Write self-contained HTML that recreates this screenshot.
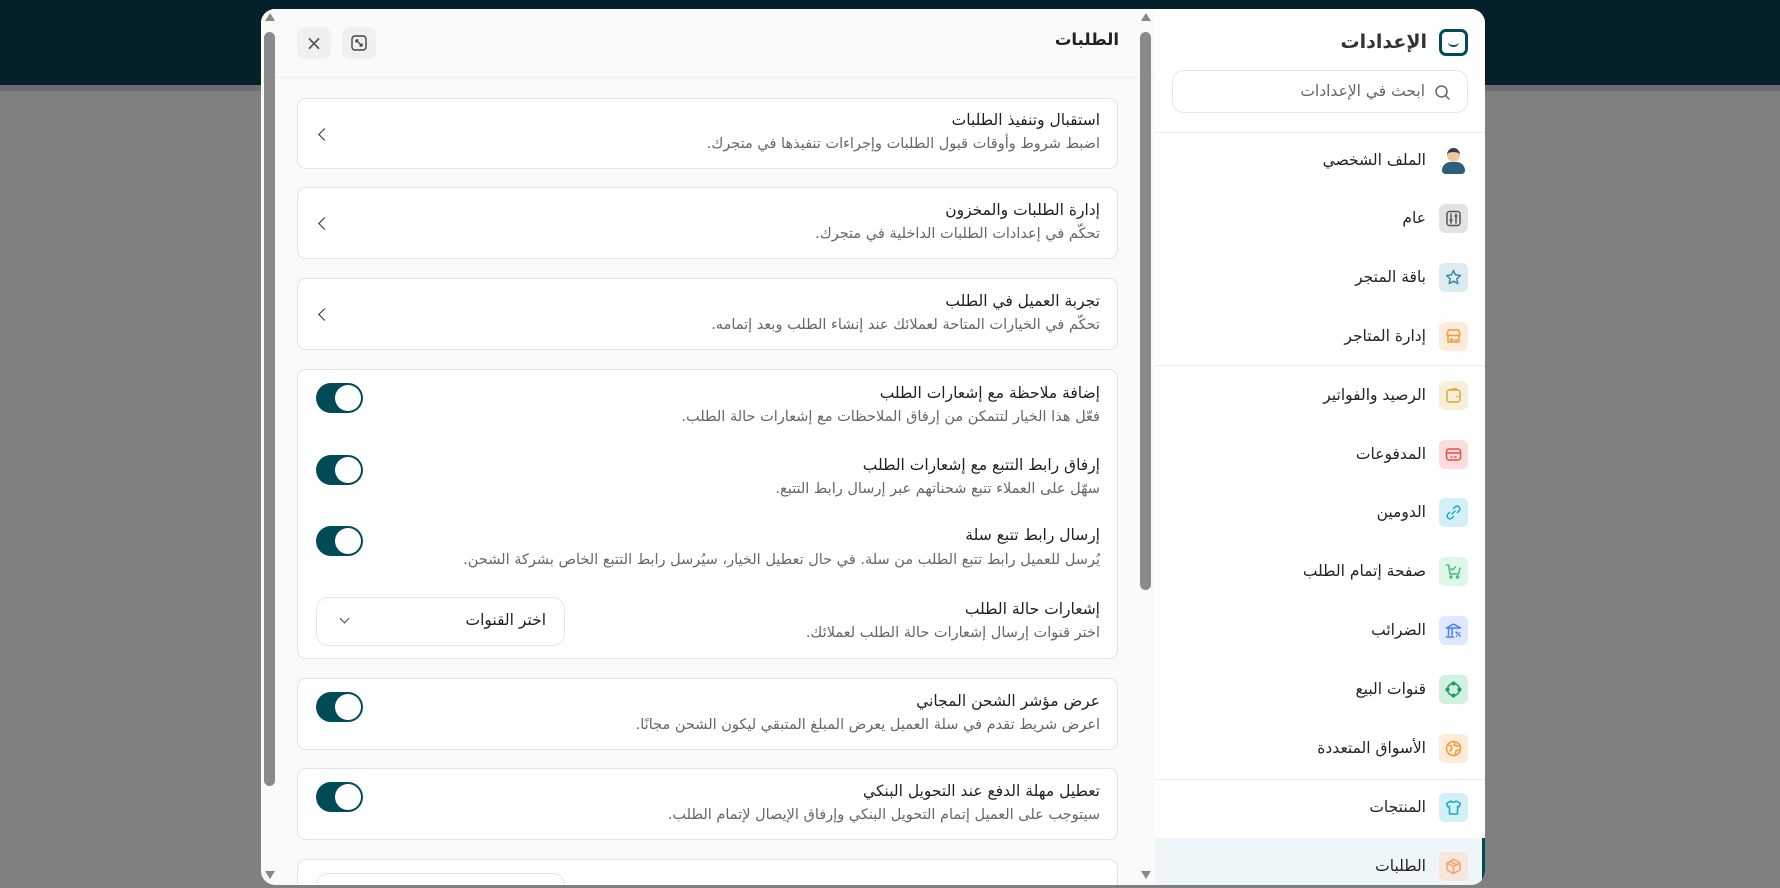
<!DOCTYPE html>
<html dir="ltr"><head><meta charset="utf-8"><style>
*{box-sizing:border-box;margin:0;padding:0}
body{width:1780px;height:888px;overflow:hidden;background:#808080;font-family:"DejaVu Sans","Liberation Sans",sans-serif;position:relative;color:#222}
.top{position:absolute;left:0;top:0;width:1780px;height:85px;background:#06202a}
.abs{position:absolute}
.modal{position:absolute;left:261px;top:9px;width:1224px;height:876px;background:#fafafa;border-radius:14px;overflow:hidden}
.side{position:absolute;left:894px;top:0;width:330px;height:876px;background:#fff}
.hdr{position:absolute;left:0;top:0;width:894px;height:68px;background:#fafafa}
.card{position:absolute;left:36px;width:821px;background:#fff;border:1px solid #e3e3e3;border-radius:9px}
.t{position:absolute;right:17px;font-size:15.5px;color:#1f1f1f;direction:rtl;white-space:nowrap}
.d{position:absolute;right:17px;font-size:14.5px;color:#666;direction:rtl;white-space:nowrap}
.chev{position:absolute;left:22px;width:9px;height:9px;border-left:1.6px solid #333;border-bottom:1.6px solid #333;transform:rotate(45deg)}
.tg{position:absolute;left:18px;width:47px;height:30px;border-radius:15px;background:#004b57}
.tg:after{content:"";position:absolute;right:2px;top:2px;width:26px;height:26px;border-radius:50%;background:#fff}
.it{position:absolute;right:17px;width:310px;height:40px;direction:rtl}
.ib{position:absolute;right:0;top:5px;width:29px;height:29px;border-radius:6px}
.ib svg{position:absolute;left:6px;top:6px;width:17px;height:17px;fill:none;stroke-width:1.5;stroke-linecap:round;stroke-linejoin:round}
.il{position:absolute;right:42px;top:10px;font-size:15.5px;color:#222;white-space:nowrap}
.sb{position:absolute;background:#8a8a8a;border-radius:6px}
</style></head><body>
<div class="top"></div>
<div class="abs" style="left:0;top:85px;width:1780px;height:6px;background:#6a6e70"></div>
<div class="modal">
 <div class="hdr">
  <div class="abs" style="left:36px;top:18px;width:34px;height:32px;background:#f0f0f0;border-radius:8px;font-size:20px;color:#555;text-align:center;line-height:32px">×</div>
  <div class="abs" style="left:81px;top:18px;width:34px;height:32px;background:#f0f0f0;border-radius:8px"><svg class="abs" style="left:9px;top:8px" width="16" height="16" viewBox="0 0 16 16" fill="none" stroke="#444" stroke-width="1.4"><rect x="1" y="1" width="14" height="14" rx="3"/><path d="M5 5l6 6M5 5v2.5M5 5h2.5M11 11v-2.5M11 11h-2.5"/></svg></div>
  <div class="abs" style="right:36px;top:21px;font-size:16.5px;font-weight:bold;color:#222;direction:rtl">الطلبات</div>
 </div>
 <div class="abs" style="left:0;top:68px;width:894px;height:1px;background:#f0f0f0"></div>
 <div class="sb" style="left:3px;top:23px;width:11px;height:754px"></div>
 <div class="sb" style="left:879px;top:23px;width:11px;height:558px"></div>
 <div class="abs" style="left:4px;top:4px;width:0;height:0;border-left:5px solid transparent;border-right:5px solid transparent;border-bottom:8px solid #888"></div>
 <div class="abs" style="left:880px;top:4px;width:0;height:0;border-left:5px solid transparent;border-right:5px solid transparent;border-bottom:8px solid #888"></div>
 <div class="abs" style="left:4px;top:862px;width:0;height:0;border-left:5px solid transparent;border-right:5px solid transparent;border-top:8px solid #888"></div>
 <div class="abs" style="left:880px;top:862px;width:0;height:0;border-left:5px solid transparent;border-right:5px solid transparent;border-top:8px solid #888"></div>

 <div class="card" style="top:89px;height:71px"><div class="t" style="top:12px">استقبال وتنفيذ الطلبات</div><div class="d" style="top:37px">اضبط شروط وأوقات قبول الطلبات وإجراءات تنفيذها في متجرك.</div><div class="chev" style="top:31px"></div></div>
 <div class="card" style="top:178px;height:72px"><div class="t" style="top:13px">إدارة الطلبات والمخزون</div><div class="d" style="top:38px">تحكّم في إعدادات الطلبات الداخلية في متجرك.</div><div class="chev" style="top:31px"></div></div>
 <div class="card" style="top:269px;height:72px"><div class="t" style="top:13px">تجربة العميل في الطلب</div><div class="d" style="top:38px">تحكّم في الخيارات المتاحة لعملائك عند إنشاء الطلب وبعد إتمامه.</div><div class="chev" style="top:31px"></div></div>
 <div class="card" style="top:360px;height:290px">
  <div class="t" style="top:14px">إضافة ملاحظة مع إشعارات الطلب</div><div class="d" style="top:39px">فعّل هذا الخيار لتتمكن من إرفاق الملاحظات مع إشعارات حالة الطلب.</div><div class="tg" style="top:13px"></div>
  <div class="t" style="top:86px">إرفاق رابط التتبع مع إشعارات الطلب</div><div class="d" style="top:111px">سهّل على العملاء تتبع شحناتهم عبر إرسال رابط التتبع.</div><div class="tg" style="top:85px"></div>
  <div class="t" style="top:156px">إرسال رابط تتبع سلة</div><div class="d" style="top:182px">يُرسل للعميل رابط تتبع الطلب من سلة. في حال تعطيل الخيار، سيُرسل رابط التتبع الخاص بشركة الشحن.</div><div class="tg" style="top:156px"></div>
  <div class="t" style="top:230px">إشعارات حالة الطلب</div><div class="d" style="top:255px">اختر قنوات إرسال إشعارات حالة الطلب لعملائك.</div>
  <div class="abs" style="left:18px;top:227px;width:249px;height:49px;border:1px solid #e6e6e6;border-radius:12px"><div class="abs" style="right:18px;top:13px;font-size:15.5px;direction:rtl">اختر القنوات</div><div class="abs" style="left:24px;top:17px;width:7px;height:7px;border-left:1.4px solid #444;border-bottom:1.4px solid #444;transform:rotate(-45deg)"></div></div>
 </div>
 <div class="card" style="top:669px;height:72px"><div class="t" style="top:13px">عرض مؤشر الشحن المجاني</div><div class="d" style="top:38px">اعرض شريط تقدم في سلة العميل يعرض المبلغ المتبقي ليكون الشحن مجانًا.</div><div class="tg" style="top:13px"></div></div>
 <div class="card" style="top:759px;height:72px"><div class="t" style="top:13px">تعطيل مهلة الدفع عند التحويل البنكي</div><div class="d" style="top:38px">سيتوجب على العميل إتمام التحويل البنكي وإرفاق الإيصال لإتمام الطلب.</div><div class="tg" style="top:13px"></div></div>
 <div class="card" style="top:850px;height:60px"><div class="abs" style="left:18px;top:13px;width:249px;height:49px;border:1px solid #e6e6e6;border-radius:12px"></div></div>

 <div class="side">
  <div class="abs" style="right:17px;top:20px;width:29px;height:27px;border:3px solid #004b57;border-radius:7px"><div class="abs" style="left:6px;top:10px;width:11px;height:5px;border-bottom:2.5px solid #004b57;border-radius:0 0 6px 6px"></div></div>
  <div class="abs" style="right:58px;top:22px;font-size:19px;font-weight:bold;color:#333;direction:rtl">الإعدادات</div>
  <div class="abs" style="left:17px;top:61px;width:296px;height:43px;border:1px solid #e6e6e6;border-radius:12px">
   <svg class="abs" style="right:16px;top:13px" width="17" height="17" viewBox="0 0 17 17" fill="none" stroke="#666" stroke-width="1.5"><circle cx="7.5" cy="7.5" r="5.5"/><path d="M11.5 11.5l4 4"/></svg>
   <div class="abs" style="right:42px;top:11px;font-size:15.5px;color:#666;direction:rtl">ابحث في الإعدادات</div>
  </div>
  <div class="abs" style="left:0;top:123px;width:330px;height:1px;background:#eee"></div>
  <div class="abs" style="left:0;top:356px;width:330px;height:1px;background:#eee"></div>
  <div class="abs" style="left:0;top:770px;width:330px;height:1px;background:#eee"></div>
  <div class="abs" style="left:0;top:829px;width:330px;height:47px;background:#eff6f8"></div>
  <div class="abs" style="left:327px;top:829px;width:3px;height:47px;background:#004b57"></div>

  <div class="it" style="top:132px"><div class="ib" style="background:transparent"><div class="abs" style="left:8px;top:2px;width:13px;height:14px;border-radius:50%;background:#f4c6a0;border-top:4px solid #2c3e50"></div><div class="abs" style="left:3px;top:16px;width:23px;height:12px;border-radius:10px 10px 4px 4px;background:#2f5d7c"></div></div><div class="il">الملف الشخصي</div></div>
  <div class="it" style="top:190px"><div class="ib" style="background:#e3e3e3"><svg viewBox="0 0 17 17" stroke="#555"><rect x="2" y="1.5" width="13" height="14" rx="2.5"/><path d="M6 4v9M11 4v9M5 10h2M10 6h2"/></svg></div><div class="il">عام</div></div>
  <div class="it" style="top:249px"><div class="ib" style="background:#dcebef"><svg viewBox="0 0 17 17" stroke="#3b8ba3"><path d="M8.5 1.5l2.1 4.4 4.8.6-3.5 3.3.9 4.8-4.3-2.4-4.3 2.4.9-4.8L1.6 6.5l4.8-.6z"/></svg></div><div class="il">باقة المتجر</div></div>
  <div class="it" style="top:308px"><div class="ib" style="background:#fdecd9"><svg viewBox="0 0 17 17" stroke="#f29a3a"><path d="M2 6l1.5-4h10L15 6c0 1.5-2 2-3.2 1-1 1-2.6 1-3.3 0-.7 1-2.3 1-3.3 0C4 8 2 7.5 2 6zM3 8v6h11V8M5 12h3M6.5 10.5v3M10 12h2.5"/></svg></div><div class="il">إدارة المتاجر</div></div>
  <div class="it" style="top:367px"><div class="ib" style="background:#f8efd9"><svg viewBox="0 0 17 17" stroke="#d6a93a"><rect x="2" y="3" width="13" height="12" rx="2.5"/><path d="M4 3l7-1.5V3M12 9.5h.5"/></svg></div><div class="il">الرصيد والفواتير</div></div>
  <div class="it" style="top:426px"><div class="ib" style="background:#fcdcdc"><svg viewBox="0 0 17 17" stroke="#ea4b4b"><rect x="1.5" y="3" width="14" height="11" rx="2.5"/><path d="M1.5 7h14M6 11h1M9.5 11h1.5"/></svg></div><div class="il">المدفوعات</div></div>
  <div class="it" style="top:484px"><div class="ib" style="background:#d3f0f6"><svg viewBox="0 0 17 17" stroke="#1ba8c8"><path d="M7 10l3-3M8.5 4.5l1.5-1.5a2.8 2.8 0 014 4l-1.5 1.5M8.5 12.5L7 14a2.8 2.8 0 01-4-4l1.5-1.5"/></svg></div><div class="il">الدومين</div></div>
  <div class="it" style="top:543px"><div class="ib" style="background:#dff6ea"><svg viewBox="0 0 17 17" stroke="#3cbf7a"><path d="M1.5 2h2l1.5 9h8.5l1.5-6M6 5.5l1.5 1.5 3-3"/><circle cx="6" cy="14" r="1"/><circle cx="12.5" cy="14" r="1"/></svg></div><div class="il">صفحة إتمام الطلب</div></div>
  <div class="it" style="top:602px"><div class="ib" style="background:#dfe8fc"><svg viewBox="0 0 17 17" stroke="#4a7cea"><path d="M1.5 6l7-4 7 4zM3.5 7v6M7 7v6M1.5 15h7M11 10l4 4M11.5 14h.1M14.5 10.5h.1"/></svg></div><div class="il">الضرائب</div></div>
  <div class="it" style="top:661px"><div class="ib" style="background:#d2f0e0"><svg viewBox="0 0 17 17" stroke="#1e9a5a"><path d="M8.5 2.5A6 6 0 0114.5 8.5 6 6 0 018.5 14.5 6 6 0 012.5 8.5 6 6 0 018.5 2.5"/><circle cx="8.5" cy="2.5" r="1.3"/><circle cx="14.5" cy="8.5" r="1.3"/><circle cx="8.5" cy="14.5" r="1.3"/><circle cx="2.5" cy="8.5" r="1.3"/></svg></div><div class="il">قنوات البيع</div></div>
  <div class="it" style="top:720px"><div class="ib" style="background:#fdecd9"><svg viewBox="0 0 17 17" stroke="#f29a3a"><circle cx="8.5" cy="8.5" r="7"/><path d="M3 5l3 1 1 3-2 2M10 2l-1 3 3 1 3-1M10 15l1-4 3-1"/></svg></div><div class="il">الأسواق المتعددة</div></div>
  <div class="it" style="top:779px"><div class="ib" style="background:#d3f0f6"><svg viewBox="0 0 17 17" stroke="#1ba8c8"><path d="M6 2L1.5 4.5 3 8l1.5-.7V15h8V7.3L14 8l1.5-3.5L11 2c-.5 1.5-4.5 1.5-5 0z"/></svg></div><div class="il">المنتجات</div></div>
  <div class="it" style="top:838px"><div class="ib" style="background:#f7e6dc"><svg viewBox="0 0 17 17" stroke="#f5a070"><path d="M8.5 1.5l6.5 3.5v7l-6.5 3.5L2 12V5zM2 5l6.5 3.5L15 5M8.5 8.5v7M5 3.3l6.5 3.5"/></svg></div><div class="il">الطلبات</div></div>
 </div>
</div>
</body></html>
